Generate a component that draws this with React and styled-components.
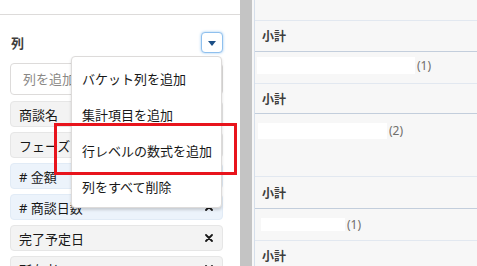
import React from 'react';
import styled, { createGlobalStyle, css } from 'styled-components';

const GlobalStyle = createGlobalStyle`
  html, body {
    margin: 0;
    padding: 0;
    width: 477px;
    height: 266px;
    overflow: hidden;
    background: #fff;
  }
  body {
    font-family: "Noto Sans", "Noto Sans CJK JP", sans-serif;
    color: #181818;
  }
`;

const Page = styled.div`
  position: relative;
  display: flex;
  width: 477px;
  height: 266px;
  overflow: hidden;
`;

// Left column: field list
const LeftPanel = styled.div`
  width: 240px;
  flex: none;
  background: #fff;
`;

const TopStrip = styled.div`
  height: 14px;
  border-bottom: 1px solid #dddbda;
`;

const Section = styled.div`
  padding: 17px 17px 0 10px;
`;

const LabelRow = styled.div`
  position: relative;
  display: flex;
  align-items: center;
  justify-content: space-between;
  height: 21px;
`;

const Label = styled.span`
  font-size: 13px;
  font-weight: 700;
  color: #3e3e3c;
  padding-left: 1px;
`;

const DropButton = styled.button`
  display: flex;
  align-items: center;
  justify-content: center;
  width: 22px;
  height: 21px;
  padding: 0;
  background: #fff;
  border: 1px solid #8fc0ee;
  border-radius: 4px;
  box-shadow: 0 0 3px #9dc8f0;
`;

const Caret = styled.span`
  width: 0;
  height: 0;
  border-left: 4px solid transparent;
  border-right: 4px solid transparent;
  border-top: 5px solid #1c4f86;
  margin-top: 1px;
`;

const Menu = styled.ul`
  position: absolute;
  top: 24px;
  right: 1px;
  width: 151px;
  margin: 0;
  padding: 3px 0;
  list-style: none;
  background: #fff;
  border: 1px solid #dddbda;
  border-radius: 4px;
  box-shadow: 0 2px 3px rgba(0, 0, 0, 0.16);
  box-sizing: border-box;
  z-index: 2;
`;

const MenuItem = styled.li`
  height: 36px;
  display: flex;
  align-items: center;
  padding: 0 10px;
  font-size: 13px;
  color: #181818;
  white-space: nowrap;
`;

const SearchInput = styled.input`
  display: block;
  box-sizing: border-box;
  width: 100%;
  height: 32px;
  margin-top: 10px;
  padding: 0 12px;
  border: 1px solid #dddbda;
  border-radius: 4px;
  font-family: "Noto Sans", "Noto Sans CJK JP", sans-serif;
  font-size: 13px;
  &::placeholder {
    color: #8a8886;
  }
`;

const FieldList = styled.div`
  display: flex;
  flex-direction: column;
  gap: 5px;
  margin-top: 6px;
`;

const FieldPill = styled.div`
  box-sizing: border-box;
  height: 26px;
  display: flex;
  align-items: center;
  justify-content: space-between;
  padding: 0 9px 0 8px;
  border-radius: 4px;
  font-size: 13px;
  color: #181818;
  ${p =>
    p.$measure
      ? css`
          background: #ecf3fb;
          border: 1px solid #e1ebf6;
        `
      : css`
          background: #f3f3f3;
          border: 1px solid #e6e6e6;
        `}
`;

const RemoveIcon = () => (
  <svg width="8" height="8" viewBox="0 0 8 8" aria-hidden="true">
    <path d="M1 1 L7 7 M7 1 L1 7" stroke="#181818" strokeWidth="1.8" strokeLinecap="round" />
  </svg>
);

const Divider = styled.div`
  width: 12px;
  flex: none;
  background: #c4c4c4;
`;

// Right column: report preview
const RightPanel = styled.div`
  flex: 1;
  background: #f7f7f7;
  padding-left: 2px;
`;

const Grid = styled.div`
  height: 100%;
  border-left: 1px solid #d6dfeb;
`;

const Row = styled.div`
  box-sizing: border-box;
  height: ${p => p.$h}px;
  border-bottom: 1px solid ${p => (p.$dark ? '#c3cedc' : '#e2e8f0')};
`;

const SubtotalRow = styled(Row)`
  display: flex;
  align-items: center;
  padding-left: 7px;
  font-size: 12px;
  font-weight: 700;
  color: #3e3e3c;
`;

const ValueRow = styled(Row)`
  display: flex;
  align-items: flex-start;
  padding-top: ${p => p.$top}px;
  padding-left: ${p => p.$inset}px;
`;

const ValueLine = styled.div`
  display: flex;
  align-items: center;
`;

const Redacted = styled.span`
  display: block;
  background: #fff;
`;

const Count = styled.span`
  margin-left: 2px;
  font-size: 12px;
  color: #706e6b;
`;

const Highlight = styled.div`
  position: absolute;
  left: 54px;
  top: 123px;
  width: 183px;
  height: 52px;
  box-sizing: border-box;
  border: 3px solid #e8141c;
  z-index: 3;
`;

const fields = [
  { name: '商談名' },
  { name: 'フェーズ' },
  { name: '# 金額', measure: true },
  { name: '# 商談日数', measure: true },
  { name: '完了予定日' },
  { name: '所有者' },
];

const menuItems = ['バケット列を追加', '集計項目を追加', '行レベルの数式を追加', '列をすべて削除'];

const rows = [
  { kind: 'blank', h: 21 },
  { kind: 'sub', h: 31 },
  { kind: 'value', h: 32, top: 5, inset: 2, w: 158, bh: 17, n: 1 },
  { kind: 'sub', h: 30 },
  { kind: 'value', h: 63, top: 8, inset: 3, w: 129, bh: 16, n: 2 },
  { kind: 'sub', h: 32 },
  { kind: 'value', h: 32, top: 7, inset: 6, w: 84, bh: 13, n: 1 },
  { kind: 'sub', h: 30 },
];

const App = () => {
  return (
    <>
      <GlobalStyle />
      <Page>
        <LeftPanel>
          <TopStrip />
          <Section>
            <LabelRow>
              <Label>列</Label>
              <DropButton type="button">
                <Caret />
              </DropButton>
              <Menu>
                {menuItems.map(item => (
                  <MenuItem key={item}>{item}</MenuItem>
                ))}
              </Menu>
            </LabelRow>
            <SearchInput placeholder="列を追加..." />
            <FieldList>
              {fields.map(f => (
                <FieldPill key={f.name} $measure={f.measure}>
                  <span>{f.name}</span>
                  <RemoveIcon />
                </FieldPill>
              ))}
            </FieldList>
          </Section>
        </LeftPanel>
        <Divider />
        <RightPanel>
          <Grid>
            {rows.map((r, i) => {
              if (r.kind === 'blank') return <Row key={i} $h={r.h} />;
              if (r.kind === 'sub')
                return (
                  <SubtotalRow key={i} $h={r.h} $dark>
                    小計
                  </SubtotalRow>
                );
              return (
                <ValueRow key={i} $h={r.h} $top={r.top} $inset={r.inset}>
                  <ValueLine>
                    <Redacted style={{ width: r.w, height: r.bh }} />
                    <Count>({r.n})</Count>
                  </ValueLine>
                </ValueRow>
              );
            })}
          </Grid>
        </RightPanel>
        <Highlight />
      </Page>
    </>
  );
};

export default App;
